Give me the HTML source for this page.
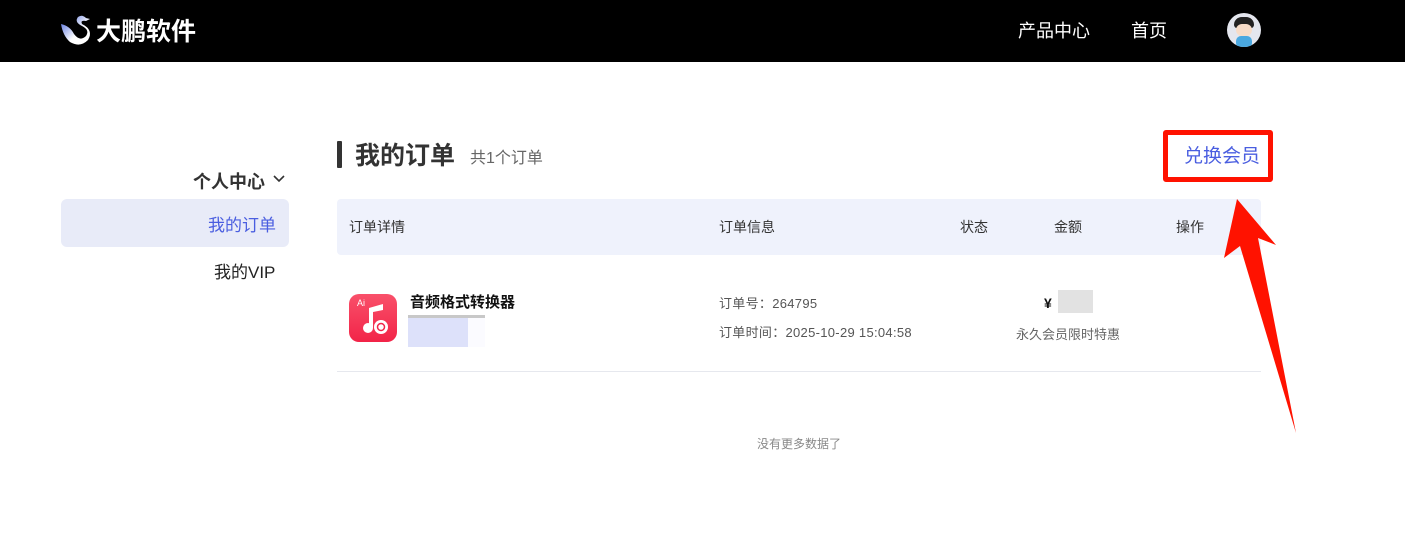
<!DOCTYPE html>
<html><head><meta charset="utf-8"><style>
*{margin:0;padding:0;box-sizing:border-box}
body{width:1405px;height:549px;background:#fff;position:relative;overflow:hidden;font-family:"Liberation Sans","Noto Sans CJK SC",sans-serif;color:#333}
.abs{position:absolute;line-height:1.2}
.top{left:0;top:0;width:1405px;height:62px;background:#000}
</style></head><body>
<div class="abs top">
  <svg class="abs" style="left:60px;top:14px" width="34" height="34" viewBox="0 0 34 34">
    <defs><linearGradient id="g" x1="0" y1="0" x2="1" y2="1"><stop offset="0" stop-color="#3d5bd8"/><stop offset="0.6" stop-color="#fff"/></linearGradient></defs>
    <path d="M1 10 Q10 12 14 20 Q20 28 26 22 Q30 16 22 12 Q14 8 18 3 Q22 0 26 4 L30 5 L26 7 Q20 6 22 10 Q34 16 28 26 Q20 34 10 28 Q3 22 1 10Z" fill="url(#g)"/>
  </svg>
  <div class="abs" style="left:96px;top:17px;font-size:25px;font-weight:bold;color:#fff">大鹏软件</div>
  <div class="abs" style="left:1018px;top:21px;font-size:18px;color:#fff">产品中心</div>
  <div class="abs" style="left:1131px;top:21px;font-size:18px;color:#fff">首页</div>
  <div class="abs" style="left:1227px;top:13px;width:34px;height:34px;border-radius:50%;background:#e4e6ee;overflow:hidden">
    <div class="abs" style="left:7px;top:4px;width:20px;height:11px;border-radius:10px 10px 4px 4px;background:#222"></div>
    <div class="abs" style="left:9px;top:11px;width:16px;height:12px;border-radius:6px;background:#f7dcc8"></div>
    <div class="abs" style="left:9px;top:23px;width:16px;height:12px;border-radius:5px;background:#4aa8e0"></div>
  </div>
</div>

<div class="abs" style="left:193px;top:172px;font-size:18px;font-weight:bold;color:#333">个人中心</div>
<svg class="abs" style="left:273px;top:174px" width="12" height="10"><path d="M1 2 L6 7 L11 2" stroke="#333" stroke-width="1.6" fill="none"/></svg>
<div class="abs" style="left:61px;top:199px;width:228px;height:48px;border-radius:6px;background:#e8ebf8"></div>
<div class="abs" style="left:208px;top:216px;font-size:17px;color:#4a5ee0">我的订单</div>
<div class="abs" style="left:214px;top:263px;font-size:17px;color:#222">我的VIP</div>

<div class="abs" style="left:337px;top:141px;width:5px;height:27px;background:#333;border-radius:1px"></div>
<div class="abs" style="left:355px;top:141px;font-size:25px;font-weight:bold;color:#333">我的订单</div>
<div class="abs" style="left:470px;top:149px;font-size:16px;color:#666">共1个订单</div>
<div class="abs" style="left:1184px;top:146px;font-size:19px;color:#4a5ee0">兑换会员</div>
<div class="abs" style="left:1163px;top:130px;width:110px;height:52px;border:5px solid #ff1200;border-radius:3px"></div>

<div class="abs" style="left:337px;top:199px;width:924px;height:56px;background:#eff2fc;border-radius:4px"></div>
<div class="abs" style="left:349px;top:219px;font-size:14px;color:#333">订单详情</div>
<div class="abs" style="left:719px;top:219px;font-size:14px;color:#333">订单信息</div>
<div class="abs" style="left:960px;top:219px;font-size:14px;color:#333">状态</div>
<div class="abs" style="left:1054px;top:219px;font-size:14px;color:#333">金额</div>
<div class="abs" style="left:1176px;top:219px;font-size:14px;color:#333">操作</div>

<div class="abs" style="left:349px;top:294px;width:48px;height:48px;border-radius:10px;background:linear-gradient(180deg,#f9506a,#f22448)"></div>
<div class="abs" style="left:357px;top:298px;font-size:9px;color:#fff">Ai</div>
<svg class="abs" style="left:357px;top:298px" width="40" height="40" viewBox="0 0 40 40">
  <path d="M12 30 V10 L26 6 V12 L16 14 V30" fill="#fff"/><circle cx="11" cy="30" r="5" fill="#fff"/>
  <circle cx="24" cy="29" r="7" fill="#fff"/><circle cx="24" cy="29" r="3.5" fill="none" stroke="#f22448" stroke-width="1.5"/>
</svg>
<div class="abs" style="left:410px;top:294px;font-size:15px;font-weight:bold;color:#111">音频格式转换器</div>
<div class="abs" style="left:408px;top:315px;width:77px;height:3px;background:#c8c8c8"></div>
<div class="abs" style="left:408px;top:318px;width:60px;height:29px;background:#dde1fa"></div>
<div class="abs" style="left:468px;top:318px;width:17px;height:29px;background:#fbfbff"></div>

<div class="abs" style="left:719px;top:296px;font-size:13px;color:#555;letter-spacing:0.3px">订单号：264795</div>
<div class="abs" style="left:719px;top:325px;font-size:13px;color:#555;letter-spacing:0.3px">订单时间：2025-10-29 15:04:58</div>
<div class="abs" style="left:1044px;top:295px;font-size:14px;font-weight:bold;color:#111">¥</div>
<div class="abs" style="left:1058px;top:290px;width:35px;height:23px;background:#e2e2e2"></div>
<div class="abs" style="left:1016px;top:327px;font-size:13px;color:#666">永久会员限时特惠</div>

<div class="abs" style="left:337px;top:371px;width:924px;height:1px;background:#e6e8ee"></div>
<div class="abs" style="left:757px;top:437px;font-size:12px;color:#888">没有更多数据了</div>

<svg class="abs" style="left:0;top:0" width="1405" height="549">
  <polygon points="1237,199 1276,245 1258,238 1296,433 1240,246 1224,258" fill="#ff1200"/>
</svg>
</body></html>
